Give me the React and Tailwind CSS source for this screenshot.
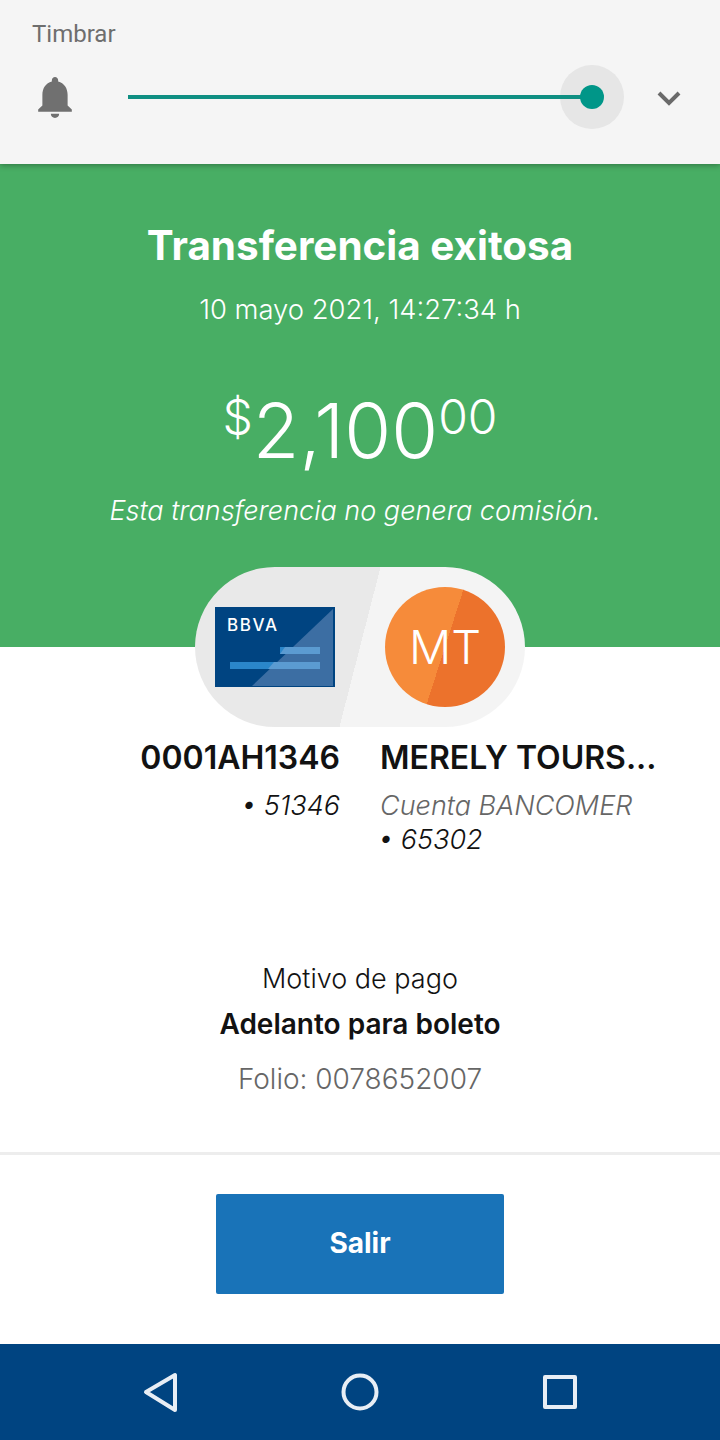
import React from 'react';

const font = { fontFamily: 'Inter, "Noto Sans", sans-serif' };

function BankCard() {
    return (
        <div className="relative w-[120px] h-[80px] shrink-0 overflow-hidden bg-[#004481]">
            <svg viewBox="0 0 120 80" className="absolute inset-0 w-full h-full">
                <polygon points="37,79 118,79 118,2" fill="#3c6ea3" />
                <rect x="15" y="55" width="90" height="7" fill="#2a86ca" />
                <rect x="65" y="40" width="40" height="7" fill="#2a86ca" />
                <polygon points="65,47 70,40 105,40 105,47" fill="#5b9bd1" />
                <polygon points="53,62 59,55 105,55 105,62" fill="#5b9bd1" />
            </svg>
            <span className="absolute left-[12px] top-[8px] text-[17px] leading-[20px] font-medium tracking-[1.6px] text-white">BBVA</span>
        </div>
    );
}

export default function App() {
    return (
        <div className="w-[720px] h-[1440px] flex flex-col bg-white overflow-hidden" style={font}>
            <header className="relative z-10 h-[164px] shrink-0 bg-[#f5f5f5] shadow-[0_1px_6px_rgba(0,0,0,0.35)]">
                <div className="pl-[32px] pt-[20px] text-[24px] leading-[28px] text-[#6e6e6e]" style={{ fontFamily: 'Roboto, sans-serif' }}>Timbrar</div>
                <div className="flex items-center mt-[17px] h-[64px] pl-[38px]">
                    <svg viewBox="4 2.5 16 19.5" className="w-[34px] h-[41px] shrink-0" fill="#707070">
                        <path d="M12 22c1.1 0 2-.9 2-2h-4c0 1.1.89 2 2 2zm6-6v-5c0-3.07-1.64-5.64-4.5-6.32V4c0-.83-.67-1.5-1.5-1.5s-1.5.67-1.5 1.5v.68C7.63 5.36 6 7.92 6 11v5l-2 2v1h16v-1l-2-2z" />
                    </svg>
                    <div className="relative ml-[56px] w-[464px] h-[4px]">
                        <div className="absolute right-[-32px] top-[-30px] w-[64px] h-[64px] rounded-full bg-[#e6e6e6]" />
                        <div className="absolute inset-0 bg-[#0f8f82]" />
                        <div className="absolute right-[-12px] top-[-10px] w-[24px] h-[24px] rounded-full bg-[#009688]" />
                    </div>
                    <svg viewBox="0 0 24 15" className="ml-[65px] mt-[2px] w-[24px] h-[15px]" fill="none" stroke="#6a6a6a" strokeWidth="4">
                        <path d="M2 2l10 10L22 2" />
                    </svg>
                </div>
            </header>

            <section className="h-[483px] shrink-0 bg-[#48ae64] flex flex-col items-center text-white">
                <h1 className="mt-[58px] text-[40.4px] leading-[48px] font-bold">Transferencia exitosa</h1>
                <p className="mt-[22px] text-[27.4px] leading-[34px] font-light">10 mayo 2021, 14:27:34 h</p>
                <div className="mt-[61px] flex items-start font-light h-[86px]">
                    <span className="text-[48px] leading-[56px] mt-[2px]">$</span>
                    <span className="text-[76px] leading-[86px]">2,100</span>
                    <span className="text-[48px] leading-[56px] mt-[2px]">00</span>
                </div>
                <p className="mt-[21px] mr-[10px] text-[27px] leading-[34px] font-light italic">Esta transferencia no genera comisión.</p>
            </section>

            <div className="-mt-[80px] mx-auto w-[330px] h-[160px] shrink-0 rounded-full flex items-center justify-between pl-[20px] pr-[20px] bg-[linear-gradient(104.4deg,#e9e9e9_50%,#f4f4f4_50%)]">
                <BankCard />
                <div className="w-[120px] h-[120px] rounded-full flex items-center justify-center text-[47px] font-light text-white bg-[linear-gradient(107.8deg,#f68b3a_50%,#ec722c_50%)]">MT</div>
            </div>

            <div className="flex justify-center gap-[40px] mt-[11px] pl-[40px]">
                <div className="w-[240px] text-right">
                    <div className="text-[32px] leading-[40px] font-semibold text-[#121212]">0001AH1346</div>
                    <div className="mt-[8px] text-[27px] leading-[40px] font-light italic text-[#121212]">• 51346</div>
                </div>
                <div className="w-[280px]">
                    <div className="text-[32px] leading-[40px] font-semibold text-[#121212]">MERELY TOURS...</div>
                    <div className="mt-[8px] text-[27px] leading-[40px] font-light italic text-[#666666]">Cuenta BANCOMER</div>
                    <div className="-mt-[6px] -ml-[2px] text-[27px] leading-[40px] font-light italic text-[#121212]">• 65302</div>
                </div>
            </div>

            <div className="flex flex-col items-center mt-[102px] text-[27px] leading-[34px]">
                <p className="font-light text-[#121212]">Motivo de pago</p>
                <p className="mt-[11px] text-[28px] font-semibold text-[#121212]">Adelanto para boleto</p>
                <p className="mt-[21px] text-[28px] font-light text-[#666666]">Folio: 0078652007</p>
            </div>

            <div className="mt-auto h-[192px] shrink-0 border-t-[3px] border-[#ededed] flex justify-center pt-[39px]">
                <button className="w-[288px] h-[100px] pb-[2px] rounded-[2px] bg-[#1973b8] text-white text-[28px] font-bold">Salir</button>
            </div>

            <nav className="h-[96px] shrink-0 bg-[#004481] flex items-center justify-center gap-[160px]">
                <svg viewBox="0 0 40 40" className="w-[40px] h-[40px]" fill="none" stroke="#e8eef5" strokeWidth="4" strokeLinejoin="round">
                    <path d="M6 20L35 3v35z" />
                </svg>
                <svg viewBox="0 0 40 40" className="w-[40px] h-[40px]" fill="none" stroke="#e8eef5" strokeWidth="4">
                    <circle cx="20" cy="20" r="16.5" />
                </svg>
                <svg viewBox="0 0 40 40" className="w-[40px] h-[40px]" fill="none" stroke="#e8eef5" strokeWidth="4" strokeLinejoin="round">
                    <rect x="5" y="5" width="30" height="30" />
                </svg>
            </nav>
        </div>
    );
}
